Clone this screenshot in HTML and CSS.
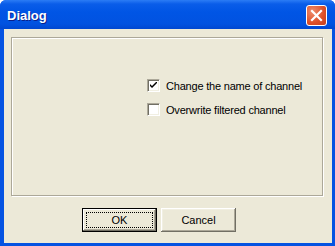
FILE: index.html
```html
<!DOCTYPE html>
<html lang="en">
<head>
  <meta charset="UTF-8" />
  <title>Dialog</title>
  <link rel="stylesheet" href="styles.css">
</head>
<body>
  <div class="window">
    <div class="titlebar">
      <span class="title">Dialog</span>
      <div class="close">
        <svg width="13" height="13" viewBox="0 0 13 13">
          <path d="M2 2 L11 11 M11 2 L2 11" stroke="#fff" stroke-width="2.2" stroke-linecap="square" />
        </svg>
      </div>
    </div>
    <div class="client">
      <div class="group">
        <label class="option">
          <span class="check checked">
            <svg width="7" height="7" viewBox="0 0 7 7">
              <path d="M0 2 L0 4 L2 6 L7 1 L7 -1 L2 4 Z" fill="#000" />
            </svg>
          </span>
          <span>Change the name of channel</span>
        </label>
        <label class="option">
          <span class="check"></span>
          <span>Overwrite filtered channel</span>
        </label>
      </div>
      <div class="buttons">
        <button class="btn default"><span class="focus">OK</span></button>
        <button class="btn">Cancel</button>
      </div>
    </div>
  </div>
</body>
</html>
```

FILE: styles.css
```css
body {
  margin: 0;
  font-family: "Liberation Sans", Arial, sans-serif;
  font-size: 11px;
}
.window {
  width: 335px;
  height: 246px;
  display: flex;
  flex-direction: column;
  background: #0553e2;
  border-radius: 6px 6px 0 0;
  overflow: hidden;
}
.titlebar {
  height: 29px;
  flex: none;
  display: flex;
  justify-content: space-between;
  align-items: flex-start;
  padding: 0 8px 0 7px;
  background: linear-gradient(#2b7cf5 0, #0a5de9 4px, #0055e5 12px, #0152e0 24px, #0047d0 29px);
}
.title {
  color: #fff;
  font-weight: bold;
  font-size: 13px;
  line-height: 14px;
  margin-top: 9px;
  text-shadow: 1px 1px #0a1f8a;
}
.close {
  margin-top: 5px;
  width: 19px;
  height: 19px;
  border: 1px solid #fff;
  border-radius: 3px;
  background: radial-gradient(circle at 30% 30%, #ef8d6c, #dd4f28 60%, #c2401f);
  display: flex;
  align-items: center;
  justify-content: center;
}
.client {
  flex: 1;
  margin: 0 3px 3px 4px;
  background: #ece9d8;
  padding: 8px 9px 0 7px;
}
.group {
  box-sizing: border-box;
  height: 159px;
  border: 1px solid #aca899;
  box-shadow: inset 1px 1px #fff, 1px 1px #fff;
  padding: 41px 0 0 135px;
  display: flex;
  flex-direction: column;
  gap: 11px;
}
.option {
  display: flex;
  align-items: center;
  gap: 6px;
  height: 13px;
  color: #000;
  letter-spacing: -0.2px;
}
.check {
  width: 13px;
  height: 13px;
  flex: none;
  box-sizing: border-box;
  background: #fff;
  border-top: 1px solid #aca899;
  border-left: 1px solid #aca899;
  border-right: 1px solid #fff;
  border-bottom: 1px solid #fff;
  box-shadow: inset 1px 1px #716f64, inset -1px -1px #f1efe2;
  display: flex;
  align-items: center;
  justify-content: center;
}
.buttons {
  display: flex;
  gap: 4px;
  padding: 12px 0 0 71px;
}
.btn {
  width: 75px;
  height: 24px;
  padding: 0;
  font-family: "Liberation Sans", Arial, sans-serif;
  font-size: 11px;
  color: #000;
  background: #ece9d8;
  border: none;
  box-shadow: inset -1px -1px #716f64, inset 1px 1px #fff, inset -2px -2px #aca899, inset 2px 2px #f1efe2;
}
.btn.default {
  border: 1px solid #000;
  box-shadow: inset -1px -1px #716f64, inset 1px 1px #fff, inset -2px -2px #aca899;
  display: flex;
  padding: 3px;
}
.focus {
  flex: 1;
  border: 1px dotted #000;
  display: flex;
  align-items: center;
  justify-content: center;
}
```
